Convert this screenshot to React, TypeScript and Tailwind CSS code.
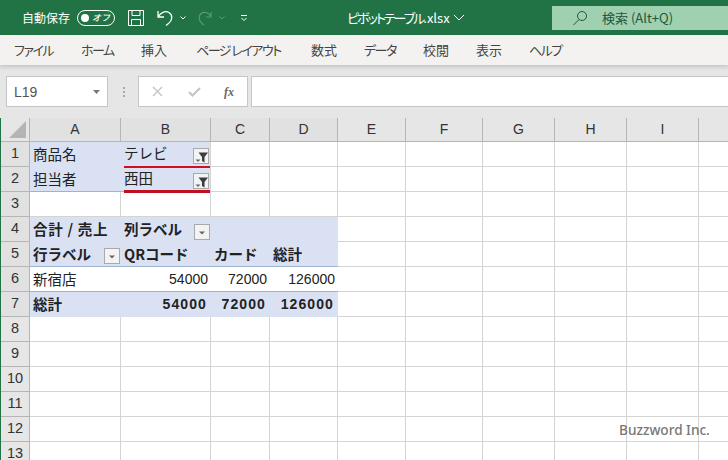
const colW = [91, 90, 59, 68, 68, 77, 72, 72, 72, 40];
const colL = ["A", "B", "C", "D", "E", "F", "G", "H", "I", ""];
const rowH = [25, 25, 25, 25, 25, 25, 25, 25, 25, 25, 25, 25, 25];
const blue = "bg-[#d9e1f2]";
const font = { fontFamily: "'Noto Sans CJK JP','Liberation Sans',sans-serif" };

type Cell = { t?: string; bold?: boolean; right?: boolean; bg?: boolean; node?: React.ReactNode; line?: boolean; noR?: boolean; up?: boolean; wide?: boolean };

function FilterBtn({ funnel, low }: { funnel?: boolean; low?: boolean }) {
  return (
    <span className={`absolute right-[1px] w-[16px] h-[16px] bg-[#f3f3f3] border border-[#a9a9a9] ${low ? "top-[7px]" : "top-[6px]"}`}>
      {funnel ? (
        <svg width="14" height="14" viewBox="0 0 14 14" className="block">
          <path d="M4.500 3.500h9.500l-3.500 4.500v5.500l-2.500-1.500V8z" fill="#3c3c3c" />
          <path d="M1.500 10.500h5l-2.500 2.500z" fill="#666" />
        </svg>
      ) : (
        <svg width="14" height="14" viewBox="0 0 14 14" className="block">
          <path d="M4 6.500h6L7 9.500z" fill="#666" />
        </svg>
      )}
    </span>
  );
}

const rows: Record<number, Cell[]> = {
  0: [
    { t: "商品名", bg: true, noR: true },
    { t: "テレビ", bg: true, up: true, node: <FilterBtn funnel /> },
  ],
  1: [
    { t: "担当者", bg: true, noR: true, line: true },
    { t: "西田", bg: true, up: true, node: <FilterBtn funnel />, line: true },
  ],
  3: [
    { t: "合計 / 売上", bold: true, bg: true, noR: true, wide: true },
    { t: "列ラベル", bold: true, bg: true, noR: true, node: <FilterBtn low /> },
    { bg: true, noR: true },
    { bg: true, noR: true },
  ],
  4: [
    { t: "行ラベル", bold: true, bg: true, noR: true, line: true, node: <FilterBtn /> },
    { t: "QRコード", bold: true, bg: true, noR: true, line: true },
    { t: "カード", bold: true, bg: true, noR: true, line: true },
    { t: "総計", bold: true, bg: true, noR: true, line: true },
  ],
  5: [
    { t: "新宿店", noR: true, line: true },
    { t: "54000", right: true, noR: true, line: true },
    { t: "72000", right: true, noR: true, line: true },
    { t: "126000", right: true, noR: true, line: true },
  ],
  6: [
    { t: "総計", bold: true, bg: true, noR: true },
    { t: "54000", bold: true, right: true, bg: true, noR: true },
    { t: "72000", bold: true, right: true, bg: true, noR: true },
    { t: "126000", bold: true, right: true, bg: true, noR: true },
  ],
};

function Tab({ label, className }: { label: string; className: string }) {
  return <span className={`text-[13px] text-[#444] whitespace-nowrap [font-feature-settings:'palt'] ${className}`}>{label}</span>;
}

export default function App() {
  return (
    <div className="w-[728px] h-[460px] overflow-hidden bg-[#e6e6e6] relative" style={font}>
      <div className="h-[35px] bg-[#217346] flex items-center text-white">
        <span className="ml-[22px] text-[12px] w-[48px] whitespace-nowrap">自動保存</span>
        <span className="ml-[7px] w-[38px] h-[16px] rounded-full border border-white flex items-center justify-between pl-[3px] pr-[4px]">
          <span className="w-[8px] h-[8px] rounded-full bg-white" />
          <span className="text-[9px] font-medium italic leading-none">オフ</span>
        </span>
        <svg className="ml-[12px]" width="18" height="18" viewBox="0 0 18 18" fill="none" stroke="white" strokeWidth="1">
          <path d="M1.500 1.500h15v15h-15zM5 1.500v5h8v-5M4.500 16.500v-6h9v6" />
        </svg>
        <svg className="ml-[11px]" width="19" height="20" viewBox="0 0 19 20" fill="none" stroke="white" strokeWidth="1.300">
          <path d="M2 3v6h6M2 9C4.500 4.500 9 2.500 13 4.500c4 2.500 3.500 8-.5 11l-2.500 2" />
        </svg>
        <svg className="ml-[5px]" width="6" height="4" viewBox="0 0 6 4" fill="none" stroke="white" strokeWidth="1">
          <path d="M0.500 0.500L3 3l2.500-2.500" />
        </svg>
        <svg className="ml-[10px]" width="18" height="18" viewBox="0 0 18 18" fill="none" stroke="#5c9a78" strokeWidth="1.200">
          <path d="M15 3v5h-5M14.500 7C12 3 8 2.500 5 4.500c-3 2.500-2.500 7 1 10l2 1.500" />
        </svg>
        <svg className="ml-[5px]" width="6" height="4" viewBox="0 0 6 4" fill="none" stroke="#5c9a78" strokeWidth="1">
          <path d="M0.500 0.500L3 3l2.500-2.500" />
        </svg>
        <svg className="ml-[15px]" width="8" height="8" viewBox="0 0 8 8" fill="none" stroke="white" strokeWidth="1">
          <path d="M1 1.500h6M1.500 4l2.500 2.500L6.500 4" />
        </svg>
        <span className="ml-[99px] text-[13px] whitespace-nowrap [font-feature-settings:'palt']">
          <span className="tracking-[-2px]">ピボットテーブル</span>
          <span>.xlsx</span>
        </span>
        <svg className="ml-[3px] shrink-0" width="12" height="7" viewBox="0 0 12 7" fill="none" stroke="white" strokeWidth="1">
          <path d="M1 1L6 6L11 1" />
        </svg>
        <div className="absolute left-[552px] top-[6px] w-[176px] h-[24px] bg-[#9fd0b0] flex items-center text-[#24563c]">
          <svg className="ml-[20px]" width="16" height="16" viewBox="0 0 16 16" fill="none" stroke="#24563c" strokeWidth="1">
            <circle cx="10" cy="6" r="4.500" />
            <path d="M7 9.500L1.500 15" />
          </svg>
          <span className="ml-[14px] text-[13px] whitespace-nowrap">検索 (Alt+Q)</span>
        </div>
      </div>

      <div className="h-[30px] bg-[#f3f2f1] flex items-center shadow-[0_2px_4px_rgba(0,0,0,0.15)] relative">
        <Tab label="ファイル" className="ml-[14px] w-[67px] tracking-[-1.500px]" />
        <Tab label="ホーム" className="w-[60px] tracking-[-1.500px]" />
        <Tab label="挿入" className="w-[55px]" />
        <Tab label="ページ レイアウト" className="w-[115px] tracking-[-1.500px]" />
        <Tab label="数式" className="w-[53px]" />
        <Tab label="データ" className="w-[59px] tracking-[-1.500px]" />
        <Tab label="校閲" className="w-[53px]" />
        <Tab label="表示" className="w-[53px]" />
        <Tab label="ヘルプ" className="tracking-[-1.500px]" />
      </div>

      <div className="h-[53px] pt-[11px] flex items-start">
        <div className="ml-[6px] w-[102px] h-[31px] bg-white border border-[#c6c6c6] flex items-center justify-between pl-[7px] pr-[7px]">
          <span className="text-[14px] text-[#555] leading-none" style={{ fontFamily: "'Liberation Sans',sans-serif" }}>L19</span>
          <svg width="7" height="4" viewBox="0 0 7 4"><path d="M0 0h7L3.500 4z" fill="#777" /></svg>
        </div>
        <div className="ml-[14px] w-[3px] h-[31px] flex flex-col items-center justify-center gap-[2px]">
          <span className="w-[2px] h-[2px] bg-[#aaa]" />
          <span className="w-[2px] h-[2px] bg-[#aaa]" />
          <span className="w-[2px] h-[2px] bg-[#aaa]" />
        </div>
        <div className="ml-[13px] w-[110px] h-[31px] bg-white border border-[#c6c6c6] flex items-center">
          <svg className="ml-[13px]" width="11" height="11" viewBox="0 0 11 11" fill="none" stroke="#c4c4c4" strokeWidth="1.400"><path d="M1 1l9 9M10 1l-9 9" /></svg>
          <svg className="ml-[25px]" width="13" height="11" viewBox="0 0 13 11" fill="none" stroke="#c4c4c4" strokeWidth="2"><path d="M1 6l3.500 3.500L12 2" /></svg>
          <span className="ml-[23px] text-[12px] italic font-bold text-[#666]" style={{ fontFamily: "'Liberation Serif',serif" }}>fx</span>
        </div>
        <div className="ml-[3px] flex-1 h-[31px] bg-white border-y border-l border-[#c6c6c6]" />
      </div>

      <div className="flex flex-col border-l-[1px] border-[#217346]">
        <div className="flex h-[24px]">
          <div className="w-[29px] bg-[#e6e6e6] border-r border-b border-[#b5b5b5] relative shrink-0">
            <svg className="absolute right-[3px] bottom-[3px]" width="17" height="17" viewBox="0 0 17 17"><path d="M17 0v17H0z" fill="#b4b4b4" /></svg>
          </div>
          {colW.map((w, i) => (
            <div
              key={i}
              style={{ width: w }}
              className={`shrink-0 h-full border-r border-b border-[#b5b5b5] text-[14px] text-[#333] flex items-center justify-center ${i < 4 ? "bg-[#e1e1e1]" : "bg-[#e6e6e6]"}`}
            >
              <span style={{ fontFamily: "'Liberation Sans',sans-serif" }}>{colL[i]}</span>
            </div>
          ))}
        </div>
        {rowH.map((h, r) => (
          <div key={r} className="flex" style={{ height: h }}>
            <div
              className={`w-[29px] shrink-0 border-r border-b border-[#b5b5b5] flex items-center justify-center text-[14.500px] text-[#333] ${r < 7 ? "bg-[#e1e1e1]" : "bg-[#e6e6e6]"}`}
              style={{ fontFamily: "'Liberation Sans',sans-serif" }}
            >
              {r + 1}
            </div>
            {colW.map((w, c) => {
              const cell = rows[r]?.[c];
              const num = !!cell?.t && /^\d/.test(cell.t);
              return (
                <div
                  key={c}
                  style={{ width: w }}
                  className={`shrink-0 relative flex items-center pl-[3px] text-[14.500px] whitespace-nowrap text-[#222] border-b ${cell?.right ? "justify-end" : ""} ${cell?.right && cell?.bold ? "pr-[4px]" : "pr-[3px]"} ${cell?.bold ? "font-bold" : ""} ${cell?.up ? "pb-[3px]" : ""} ${cell?.bg ? blue : "bg-white"} ${cell?.line ? "border-b-[#9db3cf]" : cell?.bg ? "border-b-[#d9e1f2]" : "border-b-[#d4d4d4]"} ${cell?.noR ? "" : "border-r border-r-[#d4d4d4]"}`}
                >
                  <span
                    className={num ? (cell?.bold ? "text-[14px] tracking-[1.100px]" : "text-[14px]") : cell?.wide ? "tracking-[0.7px]" : ""}
                    style={num ? { fontFamily: "'Liberation Sans',sans-serif" } : undefined}
                  >
                    {cell?.t}
                  </span>
                  {cell?.node}
                </div>
              );
            })}
          </div>
        ))}
      </div>

      <div className="absolute left-[124px] top-[166px] w-[86px] h-[2px] bg-[#d01020]" />
      <div className="absolute left-[124px] top-[190px] w-[86px] h-[3px] bg-[#c01020]" />
      <span className="absolute left-[619px] top-[420px] text-[13.600px] font-medium text-[#777] whitespace-nowrap" style={{ fontFamily: "'Noto Sans',sans-serif" }}>Buzzword Inc.</span>
    </div>
  );
}
